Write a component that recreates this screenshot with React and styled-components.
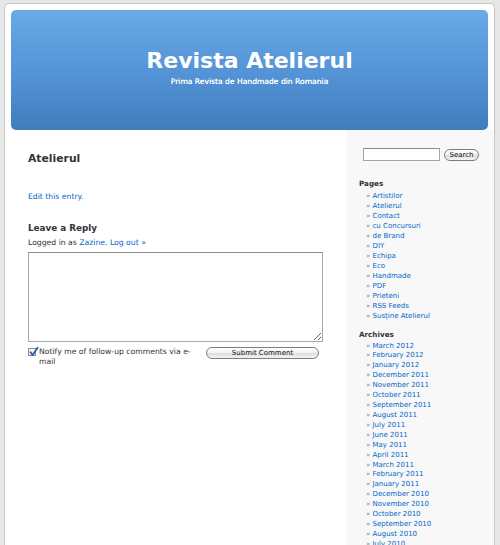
import React from "react";
import styled, { createGlobalStyle } from "styled-components";

const Global = createGlobalStyle`
  html, body { overflow: hidden; }
  body {
    margin: 0;
    background: #e7e7e7;
    font-family: "DejaVu Sans", Verdana, sans-serif;
    color: #333;
  }
  a { color: #0066cc; text-decoration: none; }
`;

const Page = styled.div`
  margin: 3px 5px 0 4px;
  background: #fff;
  border: 1px solid #c6c6c6;
  border-bottom: none;
  border-radius: 5px 5px 0 0;
  min-height: 600px;
  display: flex;
  flex-direction: column;
`;

const Header = styled.header`
  margin: 6px 6px 0 6px;
  height: 120px;
  box-sizing: border-box;
  padding-top: 40px;
  border-radius: 5px;
  background: linear-gradient(to bottom, #69aae8 0%, #5594d6 50%, #3f7dbd 100%);
  text-align: center;
  color: #fff;
`;

const SiteTitle = styled.h1`
  margin: 0;
  font-size: 22px;
  line-height: 22px;
  font-weight: bold;
`;

const Description = styled.div`
  margin-top: 5px;
  font-size: 7.6px;
  line-height: 9px;
  text-shadow: 0 0 0.4px #fff;
`;

const Body = styled.div`
  display: flex;
  flex: 1;
`;

const Main = styled.main`
  width: 342px;
  box-sizing: border-box;
  padding: 23px 0 0 23px;
`;

const PostTitle = styled.h2`
  margin: 0;
  font-size: 10.8px;
  line-height: 11px;
  font-weight: bold;
`;

const Text = styled.p`
  margin: ${(p) => p.$top || 0}px 0 0 0;
  font-size: 7.7px;
  line-height: 10px;
`;

const ReplyTitle = styled.h3`
  margin: 21px 0 0 0;
  font-size: 8.8px;
  line-height: 11px;
  font-weight: bold;
`;

const TextArea = styled.textarea`
  display: block;
  margin-top: 4px;
  width: 295px;
  height: 90px;
  box-sizing: border-box;
  border: 1px solid #a8a8a8;
  border-top-color: #8e8e8e;
  background: #fff;
  padding: 2px;
  font-family: inherit;
  font-size: 8px;
`;

const FormRow = styled.div`
  display: flex;
  align-items: flex-start;
  margin-top: 5px;
  width: 295px;
`;

const Notify = styled.label`
  display: flex;
  align-items: flex-start;
  width: 178px;
  font-size: 7.7px;
  line-height: 10px;
  padding-top: 0.3px;
`;

const CheckBox = styled.span`
  flex: none;
  position: relative;
  width: 8px;
  height: 8px;
  margin: 1px 3px 0 0;
  box-sizing: border-box;
  border: 1px solid #8a8a8a;
  background: linear-gradient(#fff, #e4e4e4);
  svg {
    position: absolute;
    left: 0px;
    top: -2px;
  }
`;

const PillButton = styled.button`
  width: ${(p) => p.$w}px;
  height: 12px;
  margin: ${(p) => p.$m || "0"};
  padding: 0;
  box-sizing: border-box;
  border: 1px solid #7d7d7d;
  border-radius: 6px;
  background: linear-gradient(to bottom, #ffffff 0%, #f1f1f1 50%, #dcdcdc 51%, #f4f4f4 100%);
  font-family: "DejaVu Sans", Verdana, sans-serif;
  font-size: 7px;
  line-height: 10px;
  color: #111;
  flex: none;
`;

const Sidebar = styled.aside`
  width: 147px;
  background: #f8f8f8;
  box-sizing: border-box;
  padding: 18px 0 0 12px;
`;

const SearchForm = styled.form`
  display: flex;
  align-items: center;
  margin-left: 4px;
  height: 13px;
`;

const SearchInput = styled.input`
  width: 77px;
  height: 13px;
  box-sizing: border-box;
  border: 1px solid #a5a5a5;
  border-top-color: #8a8a8a;
  padding: 0;
  margin: 0;
  background: #fff;
`;

const WidgetTitle = styled.h2`
  margin: ${(p) => p.$top}px 0 0 0;
  font-size: 7.2px;
  line-height: 10px;
  font-weight: bold;
  color: #333;
`;

const List = styled.ul`
  list-style: none;
  margin: ${(p) => p.$top}px 0 0 0;
  padding: 0 0 0 7px;
`;

const Item = styled.li`
  font-size: 7px;
  line-height: ${(p) => p.$lh || 10}px;
  &::before {
    content: "» ";
    color: #888;
  }
`;

const pages = [
  "Artistilor",
  "Atelierul",
  "Contact",
  "cu Concursuri",
  "de Brand",
  "DIY",
  "Echipa",
  "Eco",
  "Handmade",
  "PDF",
  "Prieteni",
  "RSS Feeds",
  "Susține Atelierul",
];

const archives = [
  "March 2012",
  "February 2012",
  "January 2012",
  "December 2011",
  "November 2011",
  "October 2011",
  "September 2011",
  "August 2011",
  "July 2011",
  "June 2011",
  "May 2011",
  "April 2011",
  "March 2011",
  "February 2011",
  "January 2011",
  "December 2010",
  "November 2010",
  "October 2010",
  "September 2010",
  "August 2010",
  "July 2010",
  "June 2010",
];

export default function App() {
  return (
    <>
      <Global />
      <Page>
        <Header>
          <SiteTitle>Revista Atelierul</SiteTitle>
          <Description>Prima Revista de Handmade din Romania</Description>
        </Header>
        <Body>
          <Main>
            <PostTitle>Atelierul</PostTitle>
            <Text $top={27.5}>
              <a href="#">Edit this entry.</a>
            </Text>
            <ReplyTitle>Leave a Reply</ReplyTitle>
            <Text $top={4}>
              Logged in as <a href="#">Zazine</a>. <a href="#">Log out »</a>
            </Text>
            <TextArea />
            <FormRow>
              <Notify>
                <CheckBox>
                  <svg width="10" height="10" viewBox="0 0 10 10">
                    <path
                      d="M1.6 5.2 L3.6 8 L8.6 0.8"
                      fill="none"
                      stroke="#2b5fb4"
                      strokeWidth="1.8"
                      strokeLinecap="round"
                      strokeLinejoin="round"
                    />
                  </svg>
                </CheckBox>
                <span>
                  Notify me of follow-up comments via e-
                  <br />
                  mail
                </span>
              </Notify>
              <PillButton $w={113}>Submit Comment</PillButton>
            </FormRow>
          </Main>
          <Sidebar>
            <SearchForm onSubmit={(e) => e.preventDefault()}>
              <SearchInput type="text" />
              <PillButton $w={35} $m="0 0 0 4px">Search</PillButton>
            </SearchForm>
            <WidgetTitle $top={17.5}>Pages</WidgetTitle>
            <List $top={2}>
              {pages.map((p) => (
                <Item key={p}>
                  <a href="#">{p}</a>
                </Item>
              ))}
            </List>
            <WidgetTitle $top={9}>Archives</WidgetTitle>
            <List $top={2}>
              {archives.map((p) => (
                <Item key={p} $lh={9.92}>
                  <a href="#">{p}</a>
                </Item>
              ))}
            </List>
          </Sidebar>
        </Body>
      </Page>
    </>
  );
}
